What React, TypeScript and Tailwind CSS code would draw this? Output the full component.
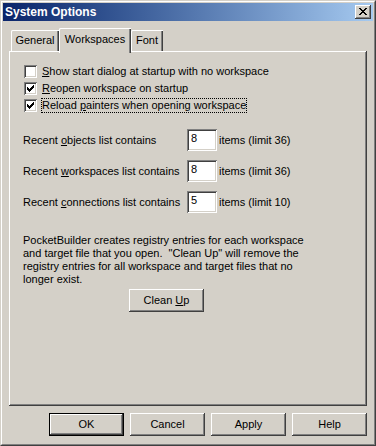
import React from "react";

const raised =
  "shadow-[inset_-1px_-1px_0_#404040,inset_1px_1px_0_#ffffff,inset_-2px_-2px_0_#808080,inset_2px_2px_0_#d4d0c8]";
const sunken =
  "shadow-[inset_1px_1px_0_#808080,inset_-1px_-1px_0_#ffffff,inset_2px_2px_0_#404040,inset_-2px_-2px_0_#d4d0c8]";

function Pixels({ rows, className }: { rows: string[]; className?: string }) {
  const w = rows[0].length;
  const h = rows.length;
  const rects: React.ReactElement[] = [];
  rows.forEach((r, y) =>
    r.split("").forEach((c, x) => {
      if (c === "X") rects.push(<rect key={`${x}-${y}`} x={x} y={y} width={1} height={1} fill="#000" />);
    })
  );
  return (
    <svg width={w} height={h} viewBox={`0 0 ${w} ${h}`} shapeRendering="crispEdges" className={className}>
      {rects}
    </svg>
  );
}

const CHECK = ["......X", ".....XX", "X...XXX", "XX.XXX.", "XXXXX..", ".XXX...", "..X...."];
const CLOSE = ["XX....XX", ".XX..XX.", "..XXXX..", "...XX...", "..XXXX..", ".XX..XX.", "XX....XX"];

function Checkbox({ checked }: { checked: boolean }) {
  return (
    <div className={`w-[13px] h-[13px] bg-white flex items-center justify-center shrink-0 ${sunken}`}>
      {checked && <Pixels rows={CHECK} />}
    </div>
  );
}

function Btn({ children, def }: { children: React.ReactNode; def?: boolean }) {
  if (def) {
    return (
      <div className="w-[75px] h-[23px] border border-black">
        <div className={`w-full h-full flex items-center justify-center ${raised}`}>
          <span>{children}</span>
        </div>
      </div>
    );
  }
  return (
    <div className={`w-[75px] h-[23px] flex items-center justify-center ${raised}`}>
      <span>{children}</span>
    </div>
  );
}

function NumRow({ label, u, rest, value, limit }: { label: string; u: string; rest: string; value: string; limit: string }) {
  return (
    <div className="flex items-center h-[22px]">
      <div className="w-[164px]">
        {label}
        <span className="underline">{u}</span>
        {rest}
      </div>
      <div className={`w-[30px] h-[22px] bg-white pl-[4px] pt-[3px] leading-[13px] ${sunken}`}>{value}</div>
      <div className="ml-[2px]">items (limit {limit})</div>
    </div>
  );
}

export default function App() {
  return (
    <div className="w-[376px] h-[446px] bg-[#d4d0c8] border border-t-[#d4d0c8] border-l-[#d4d0c8] border-r-[#404040] border-b-[#404040] font-['Liberation_Sans',Arial,sans-serif] text-[11px] leading-[13px] text-black select-none">
      <div className="w-full h-full border border-t-white border-l-white border-r-[#808080] border-b-[#808080] p-px flex flex-col">
        {/* Title bar */}
        <div className="h-[18px] bg-linear-to-r from-[#0a246a] to-[#a6caf0] flex items-center justify-between pl-[2px] pr-[2px] shrink-0">
          <span className="text-white font-bold text-[12px]">System Options</span>
          <div className={`w-[16px] h-[14px] bg-[#d4d0c8] flex items-center justify-center ${raised}`}>
            <Pixels rows={CLOSE} className="-mt-px" />
          </div>
        </div>

        {/* Content */}
        <div className="flex-1 flex flex-col px-[6px] pt-[7px] pb-[7px]">
          {/* Tabs */}
          <div className="flex items-end h-[23px] pl-[2px] relative z-10">
            <div className="w-[48px] h-[21px] flex items-center justify-center shadow-[inset_1px_0_0_#ffffff,inset_0_1px_0_#ffffff,inset_-1px_0_0_#404040,inset_-2px_0_0_#808080] rounded-tl-[2px]">
              General
            </div>
            <div className="w-[72px] h-[25px] -mb-[2px] pb-[2px] bg-[#d4d0c8] flex items-center justify-center shadow-[inset_1px_0_0_#ffffff,inset_0_1px_0_#ffffff,inset_-1px_0_0_#404040,inset_-2px_0_0_#808080] rounded-tl-[2px]">
              Workspaces
            </div>
            <div className="w-[32px] h-[21px] flex items-center justify-center shadow-[inset_1px_0_0_#ffffff,inset_0_1px_0_#ffffff,inset_-1px_0_0_#404040,inset_-2px_0_0_#808080] rounded-tl-[2px]">
              Font
            </div>
          </div>

          {/* Panel */}
          <div className={`flex-1 flex flex-col pl-[14px] pt-[12px] ${raised}`}>
            <div className="flex flex-col">
              <div className="flex items-center h-[17px] ml-px">
                <Checkbox checked={false} />
                <span className="ml-[5px]">
                  <span className="underline">S</span>how start dialog at startup with no workspace
                </span>
              </div>
              <div className="flex items-center h-[17px] ml-px">
                <Checkbox checked={true} />
                <span className="ml-[5px]">
                  <span className="underline">R</span>eopen workspace on startup
                </span>
              </div>
              <div className="flex items-center h-[17px] ml-px">
                <Checkbox checked={true} />
                <span className="ml-[4px] px-px outline outline-1 outline-dotted outline-black -outline-offset-1 leading-[15px]">
                  Reload <span className="underline">p</span>ainters when opening workspace
                </span>
              </div>
            </div>

            <div className="flex flex-col gap-[9px] mt-[15px]">
              <NumRow label="Recent " u="o" rest="bjects list contains" value="8" limit="36" />
              <NumRow label="Recent " u="w" rest="orkspaces list contains" value="8" limit="36" />
              <NumRow label="Recent " u="c" rest="onnections list contains" value="5" limit="10" />
            </div>

            <p className="mt-[21px]">
              PocketBuilder creates registry entries for each workspace
              <br />
              and target file that you open.&nbsp; "Clean Up" will remove the
              <br />
              registry entries for all workspace and target files that no
              <br />
              longer exist.
            </p>

            <div className="mt-[3px] ml-[106px]">
              <Btn>
                Clean <span className="underline">U</span>p
              </Btn>
            </div>
          </div>

          {/* Bottom buttons */}
          <div className="flex justify-end gap-[6px] mt-[7px]">
            <Btn def>OK</Btn>
            <Btn>Cancel</Btn>
            <Btn>Apply</Btn>
            <Btn>Help</Btn>
          </div>
        </div>
      </div>
    </div>
  );
}
